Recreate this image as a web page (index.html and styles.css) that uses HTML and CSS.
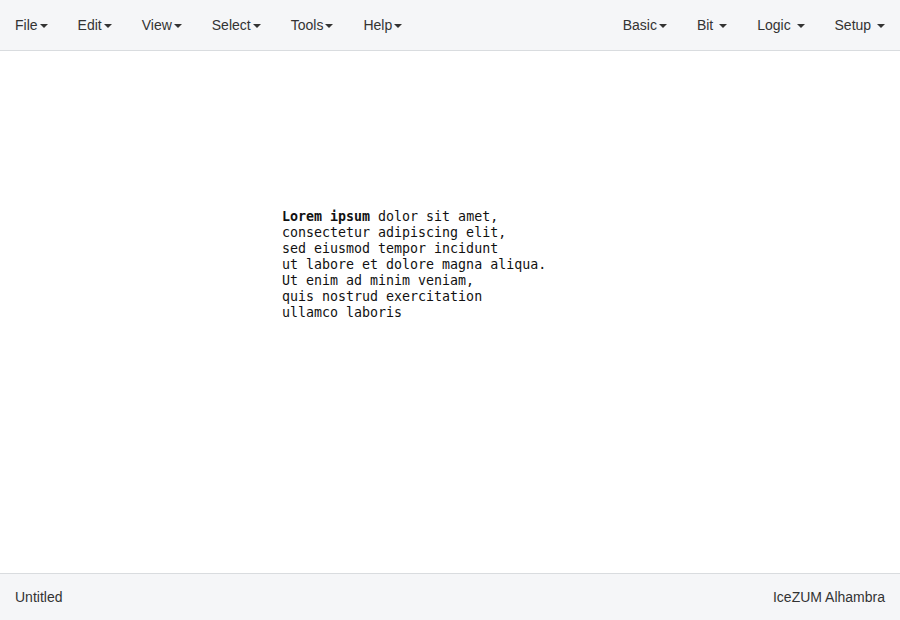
FILE: index.html
```html
<!DOCTYPE html>
<html>
<head>
<meta charset="utf-8">
<link rel="stylesheet" href="styles.css">
</head>
<body>
<div class="app">
  <nav class="navbar">
    <ul class="nav">
      <li><a>File<span class="caret"></span></a></li>
      <li><a>Edit<span class="caret"></span></a></li>
      <li><a>View<span class="caret"></span></a></li>
      <li><a>Select<span class="caret"></span></a></li>
      <li><a>Tools<span class="caret"></span></a></li>
      <li><a>Help<span class="caret"></span></a></li>
    </ul>
    <ul class="nav">
      <li><a>Basic<span class="caret"></span></a></li>
      <li><a>Bit <span class="caret"></span></a></li>
      <li><a>Logic <span class="caret"></span></a></li>
      <li><a>Setup <span class="caret"></span></a></li>
    </ul>
  </nav>
  <main class="canvas">
    <div class="info"><b>Lorem ipsum</b> dolor sit amet,
consectetur adipiscing elit,
sed eiusmod tempor incidunt
ut labore et dolore magna aliqua.
Ut enim ad minim veniam,
quis nostrud exercitation
ullamco laboris</div>
  </main>
  <footer class="footer">
    <span>Untitled</span>
    <span>IceZUM Alhambra</span>
  </footer>
</div>
</body>
</html>
```
FILE: styles.css
```css
html, body { margin: 0; padding: 0; height: 100%; }
body {
  font-family: "Liberation Sans", Arial, sans-serif;
  font-size: 14px;
  color: #333;
  background: #fff;
}
.app { display: flex; flex-direction: column; height: 620px; }
.navbar {
  height: 50px;
  background: #f5f6f8;
  border-bottom: 1px solid #d9dcdf;
  display: flex;
  justify-content: space-between;
  flex-shrink: 0;
}
.nav { list-style: none; margin: 0; padding: 0; display: flex; }
.nav a {
  display: block;
  padding: 15px 15px;
  line-height: 20px;
  color: #333;
  white-space: pre;
}
.caret {
  display: inline-block;
  width: 0; height: 0;
  margin-left: 2px;
  vertical-align: middle;
  border-top: 4px solid #333;
  border-left: 4px solid transparent;
  border-right: 4px solid transparent;
}
.canvas { flex: 1; position: relative; }
.info {
  position: absolute;
  left: 282px;
  top: 158px;
  font-family: "DejaVu Sans Mono", monospace;
  font-size: 13.3px;
  line-height: 16px;
  white-space: pre;
  color: #111;
}
.footer {
  height: 46px;
  flex-shrink: 0;
  background: #f5f6f8;
  border-top: 1px solid #d9dcdf;
  display: flex;
  justify-content: space-between;
  align-items: center;
  padding: 0 15px;
}
```
